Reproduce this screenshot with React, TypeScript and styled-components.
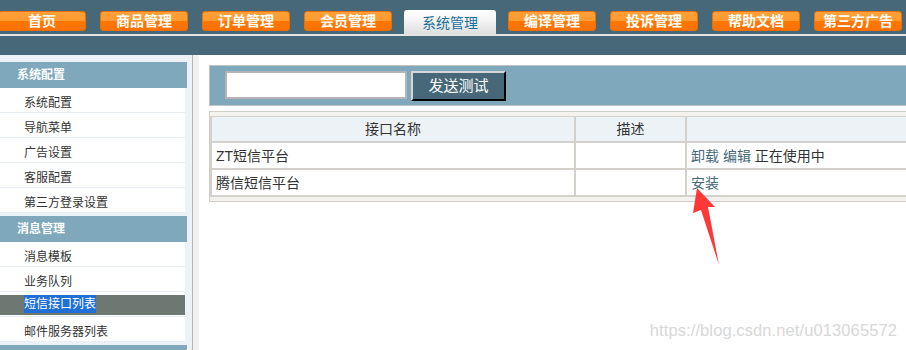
import React from 'react'
import styled, { createGlobalStyle } from 'styled-components'

const GlobalStyle = createGlobalStyle`
  html, body {
    margin: 0;
    padding: 0;
    background: #ffffff;
    overflow: hidden;
  }
  body {
    font-family: "Liberation Sans", "Noto Sans CJK SC", sans-serif;
    color: #333333;
  }
`

const Page = styled.div`
  position: relative;
  width: 906px;
  height: 350px;
  overflow: hidden;
`

const HeaderFrame = styled.div`
  height: 55px;
  background: #466878;
  display: flex;
  flex-direction: column;
`

const NavRow = styled.div`
  display: flex;
  align-items: flex-start;
  gap: 14px;
  height: 34px;
  box-sizing: border-box;
  padding-top: 10px;
  margin-left: -2px;
`

const NavButton = styled.div`
  flex: 0 0 88px;
  height: 20px;
  margin-top: 1px;
  box-sizing: border-box;
  border: 1px solid #e87000;
  border-radius: 3px;
  background: linear-gradient(to bottom, #ffa038 0%, #ff9a30 50%, #ff7600 50%, #ff7200 100%);
  color: #ffffff;
  font-size: 14px;
  font-weight: bold;
  line-height: 18px;
  text-align: center;
  white-space: nowrap;
`

const NavTab = styled.div`
  flex: 0 0 92px;
  height: 24px;
  margin: 0 -2px;
  border-radius: 3px 3px 0 0;
  background: linear-gradient(to bottom, #ffffff 0%, #f4f4f4 45%, #dedede 100%);
  color: #1a6e9c;
  font-size: 14px;
  line-height: 26px;
  text-align: center;
  white-space: nowrap;
`

const NavLine = styled.div`
  height: 2px;
  background: #e4e4e2;
`

const Body = styled.div`
  display: flex;
  height: 295px;
`

const Sidebar = styled.div`
  flex: 0 0 192px;
  background: #edf2f6;
  padding-top: 7px;
  box-sizing: border-box;
`

const Splitter = styled.div`
  flex: 0 0 6px;
  border-left: 1px solid #b4b4b4;
  background: #f1f1f1;
`

const MenuGroup = styled.div`
  margin-bottom: 3px;
`

const MenuHeader = styled.div`
  width: 187px;
  height: 26px;
  line-height: 27px;
  padding-left: 17px;
  box-sizing: border-box;
  background: #80a8bc;
  color: #ffffff;
  font-size: 12px;
  font-weight: bold;
`

const MenuItem = styled.div<{ active?: boolean }>`
  width: 185px;
  height: 25px;
  box-sizing: border-box;
  border-bottom: 1px solid #e7edf3;
  background: #ffffff;
  padding: ${({ active }) => (active ? '3px 0 1px' : '0')};
`

const MenuLink = styled.div<{ active?: boolean }>`
  height: ${({ active }) => (active ? '20px' : '24px')};
  box-sizing: border-box;
  padding-top: ${({ active }) => (active ? '0' : '3px')};
  line-height: ${({ active }) => (active ? '17px' : '24px')};
  padding-left: 24px;
  font-size: 12px;
  color: #333333;
  background: ${({ active }) => (active ? '#6e7873' : 'transparent')};
`

const Selected = styled.span`
  background: #1f6fd6;
  color: #ffffff;
  display: inline-block;
  vertical-align: top;
  line-height: 18px;
`

const Content = styled.div`
  flex: 1;
  background: #ffffff;
  padding: 10px 0 0 10px;
  overflow: hidden;
`

const FormBar = styled.div`
  width: 740px;
  height: 41px;
  box-sizing: border-box;
  border: 1px solid #c2c2c2;
  background: #80a8bc;
  display: flex;
  align-items: flex-start;
  padding: 5px 0 0 15px;
`

const TextInput = styled.input`
  width: 182px;
  height: 28px;
  box-sizing: border-box;
  border: 2px solid #b4b4b4;
  background: #ffffff;
  margin: 0;
  padding: 0 4px;
  outline: none;
`

const SendButton = styled.button`
  margin-left: 4px;
  width: 95px;
  height: 30px;
  box-sizing: border-box;
  background: #466878;
  color: #ffffff;
  font-family: "Liberation Sans", "Noto Sans CJK SC", sans-serif;
  font-size: 15px;
  line-height: 24px;
  padding: 0;
  border: 2px solid;
  border-color: #d6d6d6 #000000 #000000 #d6d6d6;
`

const TableFrame = styled.div`
  margin-top: 5px;
  width: 740px;
  box-sizing: border-box;
  border: 1px solid #d0ccc7;
  background: #f4f2ef;
  padding: 4px 0;
`

const Table = styled.table`
  width: 100%;
  border-collapse: collapse;
  font-size: 14px;
  color: #333333;
`

const HeadCell = styled.th<{ w?: number }>`
  width: ${({ w }) => (w ? `${w}px` : 'auto')};
  height: 24px;
  border: 2px solid #d4d0cb;
  border-top-width: 1px;
  background: #edf2f6;
  font-weight: normal;
  line-height: 20px;
  padding: 0;
  text-align: center;
`

const Cell = styled.td`
  height: 25px;
  border: 2px solid #d4d0cb;
  background: #ffffff;
  padding: 0 0 0 4px;
  line-height: 22px;
  text-align: left;
  white-space: nowrap;
`

const Link = styled.span`
  color: #466878;
`

const Arrow = styled.svg`
  position: absolute;
  left: 0;
  top: 0;
  pointer-events: none;
`

const Watermark = styled.div`
  position: absolute;
  right: 9px;
  top: 321px;
  font-family: "Liberation Sans", sans-serif;
  font-size: 16.5px;
  color: #d8d8d8;
  text-shadow: 0 0 1px #ffffff;
  letter-spacing: 0.1px;
`

const NAV_ITEMS = ['首页', '商品管理', '订单管理', '会员管理', '系统管理', '编译管理', '投诉管理', '帮助文档', '第三方广告']
const ACTIVE_NAV = '系统管理'

const MENU = [
  { title: '系统配置', items: ['系统配置', '导航菜单', '广告设置', '客服配置', '第三方登录设置'] },
  { title: '消息管理', items: ['消息模板', '业务队列', '短信接口列表', '邮件服务器列表'] },
  { title: '', items: [] },
]
const ACTIVE_MENU = '短信接口列表'

export default function App() {
  return (
    <Page>
      <GlobalStyle />
      <HeaderFrame>
        <NavRow>
          {NAV_ITEMS.map((name) =>
            name === ACTIVE_NAV ? <NavTab key={name}>{name}</NavTab> : <NavButton key={name}>{name}</NavButton>
          )}
        </NavRow>
        <NavLine />
      </HeaderFrame>
      <Body>
        <Sidebar>
          {MENU.map((group, i) => (
            <MenuGroup key={i}>
              <MenuHeader>{group.title}</MenuHeader>
              {group.items.map((item) => {
                const active = item === ACTIVE_MENU
                return (
                  <MenuItem key={item} active={active}>
                    <MenuLink active={active}>{active ? <Selected>{item}</Selected> : item}</MenuLink>
                  </MenuItem>
                )
              })}
            </MenuGroup>
          ))}
        </Sidebar>
        <Splitter />
        <Content>
          <FormBar>
            <TextInput />
            <SendButton>发送测试</SendButton>
          </FormBar>
          <TableFrame>
            <Table>
              <thead>
                <tr>
                  <HeadCell w={362}>接口名称</HeadCell>
                  <HeadCell w={109}>描述</HeadCell>
                  <HeadCell />
                </tr>
              </thead>
              <tbody>
                <tr>
                  <Cell>ZT短信平台</Cell>
                  <Cell />
                  <Cell>
                    <Link>卸载</Link> <Link>编辑</Link> 正在使用中
                  </Cell>
                </tr>
                <tr>
                  <Cell>腾信短信平台</Cell>
                  <Cell />
                  <Cell>
                    <Link>安装</Link>
                  </Cell>
                </tr>
              </tbody>
            </Table>
          </TableFrame>
        </Content>
      </Body>
      <Arrow width="906" height="350" viewBox="0 0 906 350">
        <polygon points="697,188 715,207 708,207 719,265 701,210 693,213" fill="#ff3838" />
      </Arrow>
      <Watermark>https://blog.csdn.net/u013065572</Watermark>
    </Page>
  )
}
